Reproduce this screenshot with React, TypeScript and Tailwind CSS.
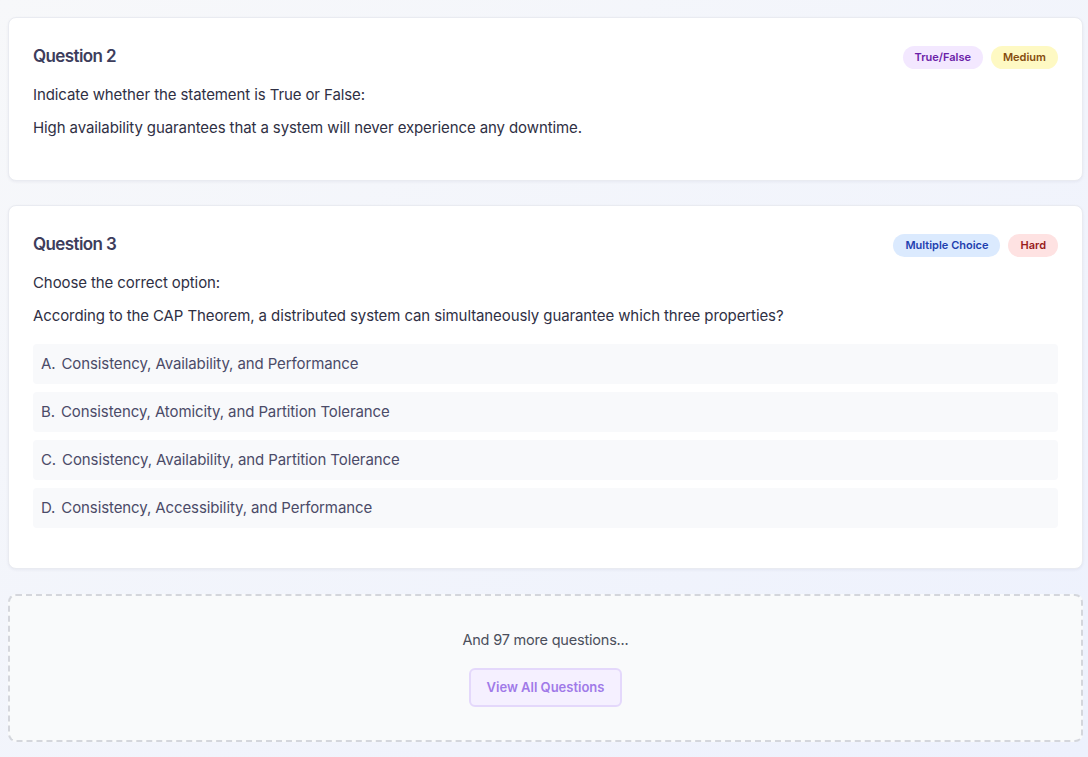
import React from 'react';

type Question = {
  id: number;
  type: string;
  difficulty: string;
  prompt: string;
  text: string;
  options?: string[];
};

const typeStyles: Record<string, string> = {
  'True/False': 'bg-[#f3e8ff] text-[#6b21a8]',
  'Multiple Choice': 'bg-[#dbeafe] text-[#1e40af]',
};

const difficultyStyles: Record<string, string> = {
  Medium: 'bg-[#fef9c3] text-[#854d0e]',
  Hard: 'bg-[#fee2e2] text-[#991b1b]',
};

const questions: Question[] = [
  {
    id: 2,
    type: 'True/False',
    difficulty: 'Medium',
    prompt: 'Indicate whether the statement is True or False:',
    text: 'High availability guarantees that a system will never experience any downtime.',
  },
  {
    id: 3,
    type: 'Multiple Choice',
    difficulty: 'Hard',
    prompt: 'Choose the correct option:',
    text: 'According to the CAP Theorem, a distributed system can simultaneously guarantee which three properties?',
    options: [
      'Consistency, Availability, and Performance',
      'Consistency, Atomicity, and Partition Tolerance',
      'Consistency, Availability, and Partition Tolerance',
      'Consistency, Accessibility, and Performance',
    ],
  },
];

const QuestionCard: React.FC<{ q: Question }> = ({ q }) => (
  <div className="bg-white rounded-lg border border-[#e9ebf1] shadow-[0_1px_3px_rgba(30,40,90,0.06)] px-6 pt-[25px] pb-6">
    <div className="flex items-center justify-between mb-3 h-7">
      <h3 className="text-[17px] font-semibold text-[#3d3d5c] tracking-[-0.6px]">Question {q.id}</h3>
      <div className="flex items-center gap-2">
        <span className={`px-3 h-[23px] flex items-center rounded-full text-[11px] font-semibold ${typeStyles[q.type]}`}>{q.type}</span>
        <span className={`px-3 h-[23px] flex items-center rounded-full text-[11px] font-semibold ${difficultyStyles[q.difficulty]}`}>{q.difficulty}</span>
      </div>
    </div>
    <p className="text-[15px] text-[#2f3044] leading-6 mb-[9px] tracking-[-0.1px]">{q.prompt}</p>
    <p className="text-[15px] text-[#2f3044] leading-6 mb-4 tracking-[-0.1px]">{q.text}</p>
    {q.options && (
      <div className="flex flex-col gap-2 mb-4">
        {q.options.map((opt, i) => (
          <div key={i} className="bg-[#f8f9fb] rounded h-10 flex items-center px-2 text-[15px] text-[#4b4b68] tracking-[-0.1px]">
            <span>{String.fromCharCode(65 + i)}.</span>
            <span className="ml-[6px]">{opt}</span>
          </div>
        ))}
      </div>
    )}
  </div>
);

export default function App() {
  return (
    <div className="min-h-screen bg-gradient-to-br from-[#f7f8fa] to-[#edf1fd] pl-2 pr-[5px] pt-[17px] pb-4 font-['Inter',sans-serif]">
      <div className="flex flex-col gap-6">
        {questions.map((q) => (
          <QuestionCard key={q.id} q={q} />
        ))}
        <div className="rounded-lg border-2 border-dashed border-[#d4d6dc] bg-[#f9fafb] pt-8 pb-[33px] mt-px flex flex-col items-center">
          <p className="text-[14.5px] leading-6 text-[#4b4f5c] mb-4 tracking-[-0.2px]">And 97 more questions...</p>
          <button className="h-[39px] px-4 rounded-md border-2 border-[#e4d8fb] bg-[#f5f0ff] text-[13px] font-semibold text-[#a07ae8]">
            View All Questions
          </button>
        </div>
      </div>
    </div>
  );
}
